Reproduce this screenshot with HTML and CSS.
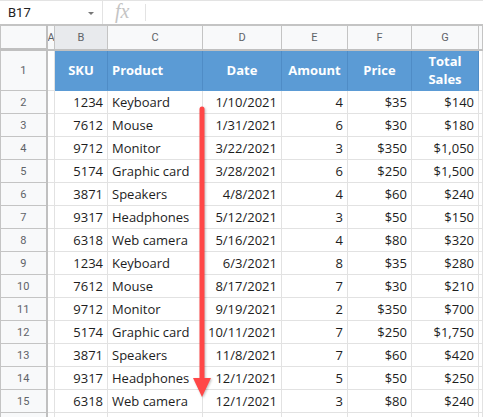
FILE: index.html
```html
<!DOCTYPE html>
<html lang="en">
<head>
    <meta charset="UTF-8">
    <title>Sales sheet</title>
    <link rel="stylesheet" href="styles.css">
</head>
<body>

    <section class="sheet">
        <!-- Formula bar -->
        <div class="formula-bar">
            <div class="name-box">
                <span>B17</span>
                <span class="caret"></span>
            </div>
            <div class="fx">fx</div>
            <div class="formula-input"></div>
        </div>

        <!-- Grid -->
        <div class="grid-wrap">
            <table class="grid">
                <colgroup>
                    <col class="w-head"><col class="w-a"><col class="w-b"><col class="w-c">
                    <col class="w-d"><col class="w-e"><col class="w-f"><col class="w-g"><col>
                </colgroup>
                <tr class="col-heads">
                    <th class="corner"></th>
                    <th>A</th><th class="selected">B</th><th>C</th><th>D</th>
                    <th>E</th><th>F</th><th>G</th><th></th>
                </tr>
                <tr class="title-row">
                    <th class="row-num">1</th>
                    <td></td>
                    <td class="title center">SKU</td>
                    <td class="title">Product</td>
                    <td class="title center">Date</td>
                    <td class="title center">Amount</td>
                    <td class="title center">Price</td>
                    <td class="title center">Total<br>Sales</td>
                    <td></td>
                </tr>
                <tbody id="rows"></tbody>
            </table>

            <!-- arrow drawn over the Date column -->
            <svg class="arrow" width="30" height="300" viewBox="0 0 30 300">
                <line x1="15" y1="3" x2="15" y2="272" stroke="#ff4747" stroke-width="5" stroke-linecap="round"/>
                <polygon points="6,272 24,272 15,291" fill="#ff4747"/>
            </svg>
        </div>
    </section>

    <script>
        const data = [
            [1234, 'Keyboard', '1/10/2021', 4, '$35', '$140'],
            [7612, 'Mouse', '1/31/2021', 6, '$30', '$180'],
            [9712, 'Monitor', '3/22/2021', 3, '$350', '$1,050'],
            [5174, 'Graphic card', '3/28/2021', 6, '$250', '$1,500'],
            [3871, 'Speakers', '4/8/2021', 4, '$60', '$240'],
            [9317, 'Headphones', '5/12/2021', 3, '$50', '$150'],
            [6318, 'Web camera', '5/16/2021', 4, '$80', '$320'],
            [1234, 'Keyboard', '6/3/2021', 8, '$35', '$280'],
            [7612, 'Mouse', '8/17/2021', 7, '$30', '$210'],
            [9712, 'Monitor', '9/19/2021', 2, '$350', '$700'],
            [5174, 'Graphic card', '10/11/2021', 7, '$250', '$1,750'],
            [3871, 'Speakers', '11/8/2021', 7, '$60', '$420'],
            [9317, 'Headphones', '12/1/2021', 5, '$50', '$250'],
            [6318, 'Web camera', '12/1/2021', 3, '$80', '$240']
        ];

        const body = document.getElementById('rows');
        let html = '';
        data.forEach((row, i) => {
            html += '<tr><th class="row-num">' + (i + 2) + '</th><td></td>';
            html += '<td class="num">' + row[0] + '</td>';
            html += '<td>' + row[1] + '</td>';
            for (let c = 2; c < 6; c++) {
                html += '<td class="num">' + row[c] + '</td>';
            }
            html += '<td></td></tr>';
        });
        // partial row at the bottom, its number falls below the frame
        html += '<tr><th class="row-num"></th>' + '<td></td>'.repeat(8) + '</tr>';
        body.innerHTML = html;
    </script>

</body>
</html>
```

FILE: styles.css
```css
* {
    margin: 0;
    padding: 0;
    box-sizing: border-box;
}

body {
    width: 483px;
    height: 417px;
    overflow: hidden;
    background-color: #fff;
    font-family: "Open Sans", Arial, sans-serif;
}

.sheet {
    width: 483px;
}

/* Formula bar */
.formula-bar {
    display: flex;
    align-items: center;
    height: 25px;
    border-top: 1px solid #e3e3e3;
    border-bottom: 1px solid #c4c4c4;
}

.name-box {
    display: flex;
    align-items: center;
    justify-content: space-between;
    width: 103px;
    height: 100%;
    padding: 0 8px 0 8px;
    font-family: Roboto, Arial, sans-serif;
    font-size: 13px;
    color: #222;
    border-right: 1px solid #e3e3e3;
}

.caret {
    width: 0;
    height: 0;
    border-left: 3px solid transparent;
    border-right: 3px solid transparent;
    border-top: 3px solid #777;
    margin-top: 2px;
}

.fx {
    width: 43px;
    height: 17px;
    padding-left: 12px;
    font-family: "Liberation Serif", serif;
    font-style: italic;
    font-size: 20px;
    line-height: 15px;
    color: #c4c4c4;
    border-right: 1px solid #e3e3e3;
}

.formula-input {
    flex: 1;
}

/* Grid */
.grid-wrap {
    position: relative;
}

.grid {
    border-collapse: collapse;
    table-layout: fixed;
    width: 483px;
    font-size: 13px;
    color: #1d1d1d;
}

.w-head { width: 46px; }
.w-a { width: 8px; }
.w-b { width: 53px; }
.w-c { width: 95px; }
.w-d { width: 79px; }
.w-e { width: 66px; }
.w-f { width: 64px; }
.w-g { width: 67px; }

.grid td {
    height: 23px;
    padding: 0 4px;
    border: 1px solid #e2e2e2;
    white-space: nowrap;
    overflow: hidden;
    line-height: 14px;
}

.col-heads th {
    height: 24px;
    background-color: #f8f9fa;
    border: 1px solid #c4c4c4;
    border-bottom: 2px solid #c0c0c0;
    font-family: Roboto, Arial, sans-serif;
    font-weight: normal;
    font-size: 11px;
    color: #5f6368;
    overflow: hidden;
}

.col-heads th.selected {
    background-color: #e8eaed;
}

.col-heads th.corner {
    border-right: 2px solid #c0c0c0;
    border-bottom: 3px solid #c0c0c0;
}

.row-num {
    background-color: #f8f9fa;
    border: 1px solid #c4c4c4;
    border-right: 2px solid #c0c0c0;
    font-family: Roboto, Arial, sans-serif;
    font-weight: normal;
    font-size: 11px;
    color: #5f6368;
}

.title-row td {
    height: 41px;
}

.grid td.title {
    background-color: #5b9bd5;
    color: #fff;
    font-weight: bold;
    border-color: #5b9bd5 #4f8cc6;
    line-height: 18px;
}

.center {
    text-align: center;
}

.num {
    text-align: right;
}

.arrow {
    position: absolute;
    left: 187px;
    top: 81px;
    filter: drop-shadow(1px 1px 1px rgba(0, 0, 0, 0.25));
}
```
